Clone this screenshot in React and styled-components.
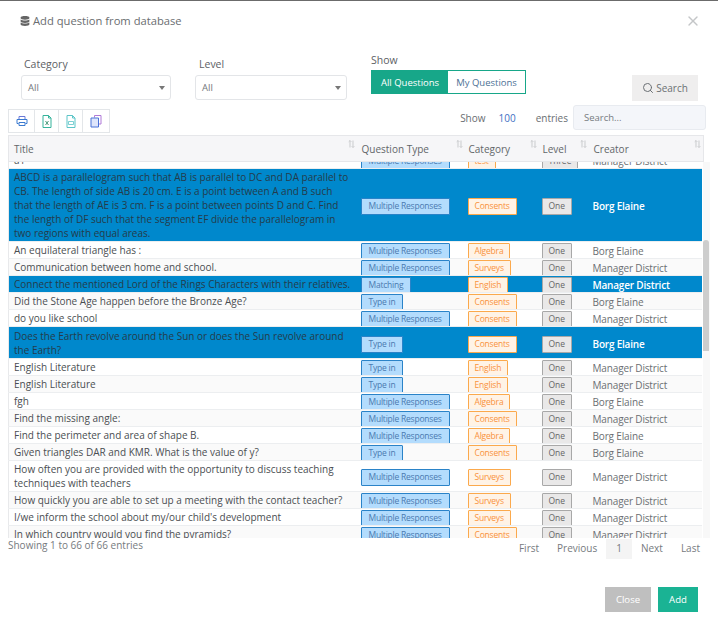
import React from "react";
import styled, { createGlobalStyle } from "styled-components";
import { FaDatabase } from "react-icons/fa";
import { Search as SearchIcon, X } from "lucide-react";

const GlobalStyle = createGlobalStyle`
  html, body { margin: 0; padding: 0; background: #fff; overflow: hidden; }
  body { font-family: "Open Sans", "Liberation Sans", sans-serif; color: #5f6468; }
  * { box-sizing: border-box; }
`;

const Modal = styled.div`
  width: 718px;
  height: 622px;
  border-top: 1px solid #6b6b6b;
  padding: 0 8px;
  display: flex;
  flex-direction: column;
`;

const Header = styled.div`
  height: 50px;
  display: flex;
  justify-content: space-between;
  align-items: flex-start;
  padding: 12px 9px 0 12px;
`;

const Title = styled.h4`
  margin: 0;
  font-size: 11.2px;
  line-height: 16px;
  font-weight: 500;
  color: #6a6d70;
  display: flex;
  align-items: center;
  gap: 3px;
`;

const CloseX = styled.div`
  color: #c4c6c8;
  display: flex;
`;

const Filters = styled.div`
  height: 54px;
  display: flex;
  padding-left: 13px;
`;

const Field = styled.div`
  width: ${(p) => p.$w}px;
  padding-top: ${(p) => p.$top}px;
`;

const Label = styled.div`
  font-size: 10.5px;
  line-height: 14px;
  color: #5d6165;
  padding-left: ${(p) => p.$indent || 0}px;
  margin-bottom: ${(p) => p.$gap || 4}px;
`;

const Select = styled.div`
  height: 25px;
  border: 1px solid #e3e5e8;
  border-radius: 3px;
  width: ${(p) => p.$w}px;
  font-size: 9.5px;
  color: #73777b;
  display: flex;
  align-items: center;
  justify-content: space-between;
  padding: 0 5px 0 6px;
`;

const Caret = styled.span`
  width: 0;
  height: 0;
  border-left: 3.5px solid transparent;
  border-right: 3.5px solid transparent;
  border-top: 4px solid #777;
`;

const Toggle = styled.div`
  display: flex;
  width: 155px;
  height: 24px;
  border: 1px solid #17a789;
`;

const ToggleBtn = styled.div`
  flex: ${(p) => p.$flex};
  display: flex;
  align-items: center;
  justify-content: center;
  font-size: 9.5px;
  font-weight: ${(p) => (p.$on ? 500 : 400)};
  background: ${(p) => (p.$on ? "#17a789" : "#fff")};
  color: ${(p) => (p.$on ? "#fff" : "#4d7195")};
`;

const SearchBtn = styled.div`
  margin-left: 106px;
  margin-top: 24px;
  width: 66px;
  height: 26px;
  background: #efeeee;
  color: #6b7074;
  font-size: 10px;
  display: flex;
  align-items: center;
  justify-content: center;
  gap: 2px;
`;

const ToolRow = styled.div`
  height: 30px;
  display: flex;
  justify-content: space-between;
  align-items: flex-start;
`;

const Tools = styled.div`
  display: flex;
  margin-top: 4px;
  border: 1px solid #e3e6e9;
  height: 24px;
`;

const ToolBtn = styled.div`
  width: ${(p) => p.$w}px;
  display: flex;
  align-items: center;
  justify-content: center;
  border-right: ${(p) => (p.$last ? "0" : "1px solid #e3e6e9")};
`;

const Length = styled.div`
  display: flex;
  align-items: center;
  height: 25px;
  font-size: 10px;
  color: #6a6e72;
  margin-right: 4px;
`;

const Count = styled.span`
  color: #3f6fc4;
  margin: 0 20px 0 13px;
`;

const FilterInput = styled.div`
  margin-left: 5px;
  width: 133px;
  height: 25px;
  background: #f4f6fa;
  border: 1px solid #e8ebf0;
  border-radius: 3px;
  padding: 0 10px;
  line-height: 23px;
  font-size: 9.5px;
  color: #777b80;
`;

const TableWrap = styled.div`
  width: 702px;
  display: flex;
  flex-direction: column;
`;

const HeadTable = styled.table`
  table-layout: fixed;
  border-collapse: collapse;
  width: 695px;
  background: #f6f6f8;
  border: 1px solid #e6e7ea;
  height: 27px;
`;

const Th = styled.th`
  text-align: left;
  font-size: 10px;
  font-weight: 500;
  color: #62666a;
  padding: 0 0 0 ${(p) => p.$pad || 0}px;
  position: relative;
`;

const SortMark = styled.svg`
  position: absolute;
  right: ${(p) => p.$right}px;
  top: 4px;
`;

const BodyRow = styled.div`
  display: flex;
  height: 376px;
  overflow: hidden;
`;

const BodyClip = styled.div`
  width: 695px;
  overflow: hidden;
`;

const BodyTable = styled.table`
  table-layout: fixed;
  border-collapse: collapse;
  width: 695px;
  margin-top: -10px;
`;

const Tr = styled.tr`
  background: ${(p) => (p.$sel ? "#0088cc" : p.$even ? "#fafafa" : "#fff")};
  border-bottom: 1px solid #eceef0;
  border-left: 1px solid #e8e9eb;
  height: ${(p) => (p.$tall ? "32px" : "auto")};
`;

const Td = styled.td`
  padding: 1px 0 1px ${(p) => p.$pad || 0}px;
  font-size: 10px;
  line-height: 14px;
  vertical-align: middle;
  color: ${(p) => (p.$sel ? "#243b4a" : "#4a4e52")};
`;

const TitleTd = styled(Td)`
  padding-right: 8px;
`;

const CreatorTd = styled(Td)`
  padding: 2px 0 0 0;
  letter-spacing: ${(p) => (p.$sel ? -0.2 : -0.15)}px;
  color: ${(p) => (p.$sel ? "#fff" : "#6b6f73")};
  font-weight: ${(p) => (p.$sel ? 600 : 400)};
`;

const tones = {
  blue: { bg: "#b3dcfd", line: "#2a83c8", fg: "#4a7ab0", space: -0.22, x: 7 },
  orange: { bg: "#fff3e6", line: "#fba94c", fg: "#f9923c", space: -0.2, x: 6 },
  gray: { bg: "#e9e8e8", line: "#a8a8a8", fg: "#666", space: 0, x: 6 },
};

// badges hang out of the row, the next row paints over their bottom edge
const Badge = styled.span`
  display: block;
  width: fit-content;
  height: 17px;
  margin: 0 0 -3px;
  padding: 0 ${(p) => tones[p.$tone].x}px;
  border: 1px solid ${(p) => tones[p.$tone].line};
  border-radius: 1px;
  background: ${(p) => tones[p.$tone].bg};
  color: ${(p) => tones[p.$tone].fg};
  font-size: 8.5px;
  letter-spacing: ${(p) => tones[p.$tone].space}px;
  line-height: 14px;
`;

const Scrollbar = styled.div`
  width: 7px;
  background: #f8f8f8;
  padding-top: 78px;
  margin-left: 1px;
`;

const Thumb = styled.div`
  width: 6px;
  height: 111px;
  background: #cdcdcd;
  border-radius: 3px 3px 0 0;
`;

const InfoRow = styled.div`
  display: flex;
  justify-content: space-between;
  height: 44px;
  font-size: 10px;
  color: #767a7e;
`;

const Info = styled.div`
  line-height: 14px;
`;

const Pager = styled.div`
  display: flex;
  align-items: flex-start;
  padding-top: 1px;
  margin-right: 1px;
`;

const Page = styled.div`
  height: 20px;
  line-height: 19px;
  padding: 0 ${(p) => p.$x || 9}px;
  background: ${(p) => (p.$on ? "#f4f4f4" : "transparent")};
`;

const Footer = styled.div`
  display: flex;
  justify-content: flex-end;
  gap: 7px;
  padding-right: 12px;
  margin-top: 5px;
`;

const FootBtn = styled.div`
  height: 25px;
  width: ${(p) => p.$w}px;
  background: ${(p) => p.$bg};
  color: #fff;
  font-size: 9.6px;
  font-weight: 500;
  display: flex;
  align-items: center;
  justify-content: center;
`;

const MR = "Multiple Responses";
const MD = "Manager District";
const BE = "Borg Elaine";

const rows = [
  { t: "a1", q: MR, c: "test", l: "Three", by: MD },
  {
    t: "ABCD is a parallelogram such that AB is parallel to DC and DA parallel to CB. The length of side AB is 20 cm. E is a point between A and B such that the length of AE is 3 cm. F is a point between points D and C. Find the length of DF such that the segment EF divide the parallelogram in two regions with equal areas.",
    q: MR, c: "Consents", l: "One", by: BE, sel: true,
  },
  { t: "An equilateral triangle has :", q: MR, c: "Algebra", l: "One", by: BE },
  { t: "Communication between home and school.", q: MR, c: "Surveys", l: "One", by: MD },
  { t: "Connect the mentioned Lord of the Rings Characters with their relatives.", q: "Matching", c: "English", l: "One", by: MD, sel: true },
  { t: "Did the Stone Age happen before the Bronze Age?", q: "Type in", c: "Consents", l: "One", by: BE },
  { t: "do you like school", q: MR, c: "Consents", l: "One", by: MD },
  { t: "Does the Earth revolve around the Sun or does the Sun revolve around the Earth?", q: "Type in", c: "Consents", l: "One", by: BE, sel: true, tall: true },
  { t: "English Literature", q: "Type in", c: "English", l: "One", by: MD },
  { t: "English Literature", q: "Type in", c: "English", l: "One", by: MD },
  { t: "fgh", q: MR, c: "Algebra", l: "One", by: BE },
  { t: "Find the missing angle:", q: MR, c: "Consents", l: "One", by: MD },
  { t: "Find the perimeter and area of shape B.", q: MR, c: "Algebra", l: "One", by: BE },
  { t: "Given triangles DAR and KMR. What is the value of y?", q: "Type in", c: "Consents", l: "One", by: BE },
  { t: "How often you are provided with the opportunity to discuss teaching techniques with teachers", q: MR, c: "Surveys", l: "One", by: MD },
  { t: "How quickly you are able to set up a meeting with the contact teacher?", q: MR, c: "Surveys", l: "One", by: MD },
  { t: "I/we inform the school about my/our child's development", q: MR, c: "Surveys", l: "One", by: MD },
  { t: "In which country would you find the pyramids?", q: MR, c: "Consents", l: "One", by: MD },
];

const columns = [352, 107, 74, 51, 111];

const Cols = () => (
  <colgroup>
    {columns.map((w, i) => (
      <col key={i} width={w} />
    ))}
  </colgroup>
);

const Sort = ({ right = 5 }) => (
  <SortMark $right={right} width="7" height="8" viewBox="0 0 7 8" fill="none" stroke="#c9cbcd" strokeWidth="1">
    <path d="M2 7.5V.5M.7 1.8 2 .5l1.3 1.3M5 .5v7M3.7 6.2 5 7.5l1.3-1.3" />
  </SortMark>
);

const PrintIcon = () => (
  <svg width="12" height="12" viewBox="0 0 12 12" fill="none" strokeWidth="1">
    <path d="M3 4V1.5h6V4" stroke="#6a78d8" />
    <path d="M2.5 8.5H1V4.5h10v4H9.5" stroke="#3a7ad0" />
    <path d="M3 7.5h6v3H3z" stroke="#3a7ad0" />
  </svg>
);

const SheetIcon = () => (
  <svg width="10" height="13" viewBox="0 0 10 13" fill="none" stroke="#35b39b" strokeWidth="1">
    <path d="M1 .5h5.5L9 3v9.5H1z" />
    <path d="M6.5.5V3H9" />
    <path d="M3.5 6l3 4M6.5 6l-3 4" stroke="#4a9a7a" />
  </svg>
);

const CsvIcon = () => (
  <svg width="10" height="13" viewBox="0 0 10 13" fill="none" stroke="#5cc5c8" strokeWidth="1">
    <path d="M1 .5h5.5L9 3v9.5H1z" />
    <path d="M6.5.5V3H9" />
    <path d="M2.5 6.5h5v3h-5z" strokeWidth=".8" />
  </svg>
);

const CopyIcon = () => (
  <svg width="12" height="13" viewBox="0 0 12 13" fill="none" strokeWidth="1">
    <path d="M4.5 2.5v-2H11v8.5H8.5" stroke="#b07ad8" />
    <path d="M1 3h7.5v9H1z" fill="#dfe6fb" stroke="#4a73d8" />
  </svg>
);

export default function App() {
  return (
    <Modal>
      <GlobalStyle />
      <Header>
        <Title>
          <FaDatabase size={10} color="#666" />
          Add question from database
        </Title>
        <CloseX>
          <X size={16} strokeWidth={2} />
        </CloseX>
      </Header>

      <Filters>
        <Field $w={174} $top={6}>
          <Label $indent={3}>Category</Label>
          <Select $w={150}>
            All
            <Caret />
          </Select>
        </Field>
        <Field $w={176} $top={6}>
          <Label $indent={4}>Level</Label>
          <Select $w={152}>
            All
            <Caret />
          </Select>
        </Field>
        <Field $w={155} $top={2}>
          <Label $gap={3}>Show</Label>
          <Toggle>
            <ToggleBtn $on $flex="77">All Questions</ToggleBtn>
            <ToggleBtn $flex="78">My Questions</ToggleBtn>
          </Toggle>
        </Field>
        <SearchBtn>
          <SearchIcon size={12} />
          Search
        </SearchBtn>
      </Filters>

      <ToolRow>
        <Tools>
          <ToolBtn $w={26}><PrintIcon /></ToolBtn>
          <ToolBtn $w={24}><SheetIcon /></ToolBtn>
          <ToolBtn $w={24}><CsvIcon /></ToolBtn>
          <ToolBtn $w={26} $last><CopyIcon /></ToolBtn>
        </Tools>
        <Length>
          Show
          <Count>100</Count>
          entries
          <FilterInput>Search...</FilterInput>
        </Length>
      </ToolRow>

      <TableWrap>
        <HeadTable>
          <Cols />
          <thead>
            <tr>
              <Th $pad={5}>Title<Sort right={6} /></Th>
              <Th $pad={1}>Question Type<Sort /></Th>
              <Th $pad={1}>Category<Sort /></Th>
              <Th $pad={1}>Level<Sort right={6} /></Th>
              <Th $pad={1}>Creator<Sort right={2} /></Th>
            </tr>
          </thead>
        </HeadTable>
        <BodyRow>
          <BodyClip>
            <BodyTable>
              <Cols />
              <tbody>
                {rows.map((r, i) => (
                  <Tr key={i} $sel={r.sel} $tall={r.tall} $even={i % 2 === 1}>
                    <TitleTd $pad={5} $sel={r.sel}>{r.t}</TitleTd>
                    <Td>
                      <Badge $tone="blue">{r.q}</Badge>
                    </Td>
                    <Td>
                      <Badge $tone="orange">{r.c}</Badge>
                    </Td>
                    <Td>
                      <Badge $tone="gray">{r.l}</Badge>
                    </Td>
                    <CreatorTd $sel={r.sel}>{r.by}</CreatorTd>
                  </Tr>
                ))}
              </tbody>
            </BodyTable>
          </BodyClip>
          <Scrollbar>
            <Thumb />
          </Scrollbar>
        </BodyRow>
      </TableWrap>

      <InfoRow>
        <Info>Showing 1 to 66 of 66 entries</Info>
        <Pager>
          <Page>First</Page>
          <Page>Previous</Page>
          <Page $on $x={10}>1</Page>
          <Page>Next</Page>
          <Page>Last</Page>
        </Pager>
      </InfoRow>

      <Footer>
        <FootBtn $w={46} $bg="#bfbfbf">Close</FootBtn>
        <FootBtn $w={40} $bg="#1ab394">Add</FootBtn>
      </Footer>
    </Modal>
  );
}
